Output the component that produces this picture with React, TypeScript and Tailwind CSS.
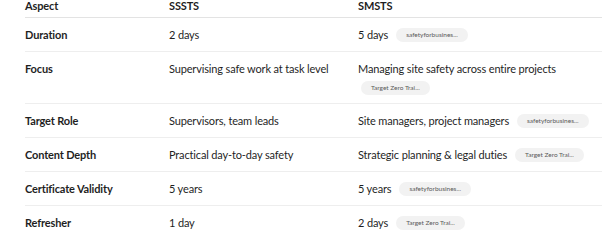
type Row = {
  aspect: string;
  sssts: string;
  smsts: string;
  source?: string;
  wrap?: boolean;
};

const rows: Row[] = [
  { aspect: "Duration", sssts: "2 days", smsts: "5 days", source: "safetyforbusines..." },
  {
    aspect: "Focus",
    sssts: "Supervising safe work at task level",
    smsts: "Managing site safety across entire projects",
    source: "Target Zero Trai...",
    wrap: true,
  },
  {
    aspect: "Target Role",
    sssts: "Supervisors, team leads",
    smsts: "Site managers, project managers",
    source: "safetyforbusines...",
  },
  {
    aspect: "Content Depth",
    sssts: "Practical day-to-day safety",
    smsts: "Strategic planning & legal duties",
    source: "Target Zero Trai...",
  },
  { aspect: "Certificate Validity", sssts: "5 years", smsts: "5 years", source: "safetyforbusines..." },
  { aspect: "Refresher", sssts: "1 day", smsts: "2 days", source: "Target Zero Trai..." },
];

function SourceChip({ label }: { label: string }) {
  return (
    <span className="inline-flex h-[14px] shrink-0 items-center rounded-full bg-[#f2f2f2] px-[10px] align-middle text-[6.5px] leading-none tracking-normal whitespace-nowrap text-[#5a5a5a]">
      {label}
    </span>
  );
}

export default function App() {
  return (
    <div
      className="h-[247px] w-[602px] overflow-hidden bg-white pl-[25px] text-[11px] tracking-[-0.15px] whitespace-nowrap text-[#1f1f1f]"
      style={{ fontFamily: 'Lato, "Noto Sans", sans-serif' }}
    >
      <table className="w-full table-fixed border-collapse">
        <colgroup>
          <col className="w-[144px]" />
          <col className="w-[189px]" />
          <col />
        </colgroup>
        <thead>
          <tr className="border-b border-[#e3e3e3]">
            <th className="pt-0 pb-[5px] text-left font-bold leading-[12px]">Aspect</th>
            <th className="pt-0 pb-[5px] text-left font-bold leading-[12px]">SSSTS</th>
            <th className="pt-0 pb-[5px] text-left font-bold leading-[12px]">SMSTS</th>
          </tr>
        </thead>
        <tbody>
          {rows.map((row, i) => (
            <tr
              key={row.aspect}
              className={i < rows.length - 1 ? "border-b border-[#eeeeee]" : ""}
            >
              <td className="pt-[9px] pb-[8px] align-top font-bold leading-[16px]">{row.aspect}</td>
              <td className="pt-[9px] pb-[8px] align-top leading-[16px]">{row.sssts}</td>
              <td className="pt-[9px] pb-[8px] align-top leading-[16px]">
                {row.wrap ? (
                  <div className="flex flex-col items-start gap-[4px]">
                    <span>{row.smsts}</span>
                    {row.source && (
                      <span className="ml-[3px] flex">
                        <SourceChip label={row.source} />
                      </span>
                    )}
                  </div>
                ) : (
                  <div className="flex items-center gap-[8px]">
                    <span>{row.smsts}</span>
                    {row.source && <SourceChip label={row.source} />}
                  </div>
                )}
              </td>
            </tr>
          ))}
        </tbody>
      </table>
    </div>
  );
}
